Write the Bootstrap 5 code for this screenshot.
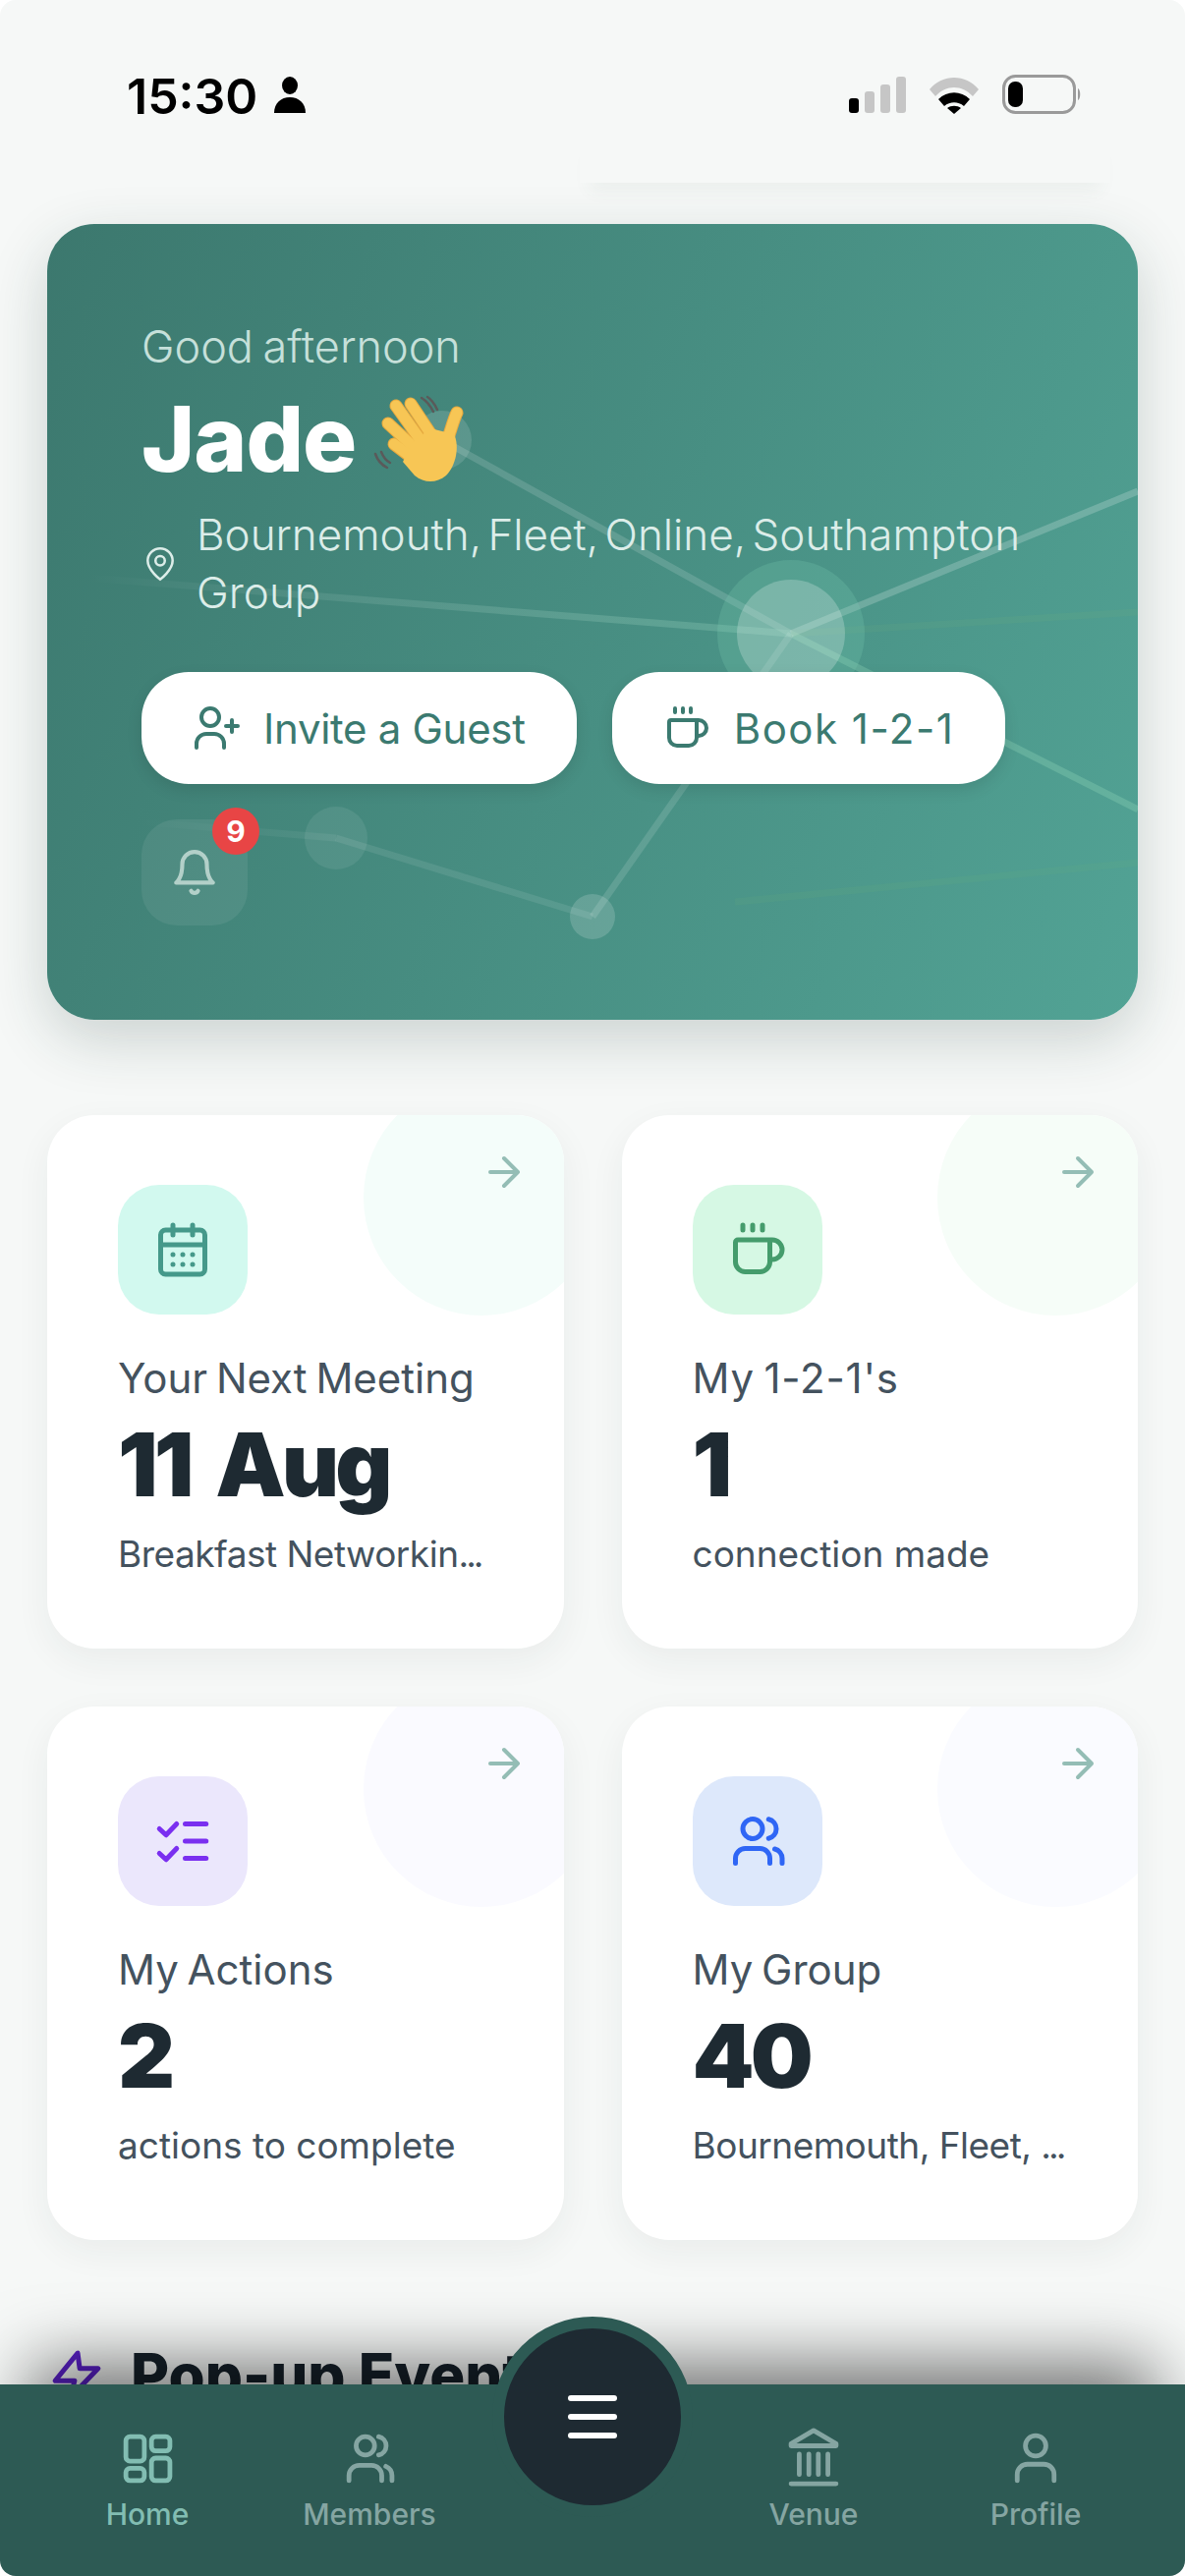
<!DOCTYPE html>
<html lang="en">

<head>
  <meta charset="UTF-8">
  <meta name="viewport" content="width=device-width, initial-scale=1.0">
  <title>Dashboard</title>
  <link rel="stylesheet" href="https://cdn.jsdelivr.net/npm/bootstrap@5.3.3/dist/css/bootstrap.min.css">
  <style>
    html, body { height: 100%; background: #fff; }

    body { font-family: Inter, "Liberation Sans", sans-serif; }

    svg { display: block; overflow: visible; fill: none; stroke: currentColor; stroke-linecap: round; stroke-linejoin: round; }

    .phone {
      position: relative;
      width: 1206px;
      height: 2622px;
      overflow: hidden;
      background: #f6f8f7;
      border-radius: 16px;
    }

    /* status bar */
    .status-bar {
      position: relative;
      height: 228px;
      padding: 70px 106px 0 129px;
    }

    .status-time { font: 600 50px/56px Inter, sans-serif; color: #000; }

    .ghost-shadow {
      position: absolute;
      left: 590px;
      top: 130px;
      width: 540px;
      height: 56px;
      background: #f6f8f7;
      box-shadow: 0 18px 18px -10px rgba(60, 100, 90, .06);
    }

    /* hero */
    .hero {
      position: relative;
      height: 810px;
      margin: 0 48px;
      padding: 97px 96px 0;
      border-radius: 48px;
      overflow: hidden;
      background: linear-gradient(112deg, #3c786e 0%, #52a395 100%);
      color: #fff;
    }

    .hero-wrap { position: relative; }

    .hero-shadow {
      position: absolute;
      left: 48px;
      right: 48px;
      top: 0;
      height: 810px;
      border-radius: 48px;
      box-shadow: 0 20px 60px rgba(30, 60, 55, .2);
    }

    .hero-net { position: absolute; left: 0; top: 0; width: 1110px; height: 810px; }

    .hero-body { position: relative; }

    .hero-greet { font-size: 45px; line-height: 56px; font-weight: 300; color: #c6e0da; word-spacing: -3px; }

    .hero-name { font-size: 92px; line-height: 100px; font-weight: 800; margin: 16px 0 0; letter-spacing: -1px; gap: 18px; }

    .hero-loc { margin-top: 18px; font-size: 44px; line-height: 59px; font-weight: 300; color: #dcede9; word-spacing: -6px; }

    .hero-btn {
      height: 114px;
      padding: 0 52px;
      gap: 24px;
      border: 0;
      border-radius: 48px;
      background: #fff;
      color: #3b7a70;
      font-size: 42px;
      font-weight: 400;
      letter-spacing: -.3px;
      box-shadow: 0 6px 16px rgba(0, 0, 0, .1);
    }

    .hero-btn.is-wide { letter-spacing: 1.5px; }

    .hero-btn:hover, .hero-btn:active { background: #fff !important; color: #3b7a70 !important; }

    .bell-box {
      position: relative;
      width: 108px;
      height: 108px;
      margin-top: 36px;
      border-radius: 36px;
      background: rgba(255, 255, 255, .07);
      color: #b3d0c9;
    }

    .bell-count {
      width: 48px;
      height: 48px;
      left: 72px;
      top: -12px;
      background: #e84545;
      font: 700 30px/48px Inter, sans-serif;
      color: #fff;
      text-align: center;
      padding: 0;
    }

    /* stat cards */
    .stat-wrap { padding: 97px 48px 0; }

    .stat-row { --bs-gutter-x: 59px; --bs-gutter-y: 59px; }

    .stat-card {
      position: relative;
      height: 543px;
      padding: 71px 72px 0;
      border: 0;
      border-radius: 48px;
      overflow: hidden;
      background: #fff;
      box-shadow: 0 12px 36px rgba(30, 50, 50, .06);
    }

    .stat-blob { position: absolute; right: -36px; top: -36px; width: 240px; height: 240px; border-radius: 50%; }

    .stat-arrow { position: absolute; right: 37px; top: 34px; color: #94bdb5; }

    .stat-icon { position: relative; width: 132px; height: 132px; border-radius: 42px; }

    .stat-label { margin-top: 40px; font-size: 42px; line-height: 50px; color: #44525e; font-weight: 400; word-spacing: -3px; }

    .stat-label.is-wide { letter-spacing: .8px; }

    .stat-value { margin-top: 13px; font-size: 90px; line-height: 100px; font-weight: 900; color: #1e2a32; letter-spacing: -4px; word-spacing: 12px; }

    .stat-sub { margin-top: 18px; font-size: 37px; line-height: 46px; color: #44525e; white-space: nowrap; }

    .stat-sub.is-cut { letter-spacing: -.5px; }

    .cut-dots { letter-spacing: -3px; }

    .tint-teal .stat-blob { background: #f4fdfa; }
    .tint-teal .stat-icon { background: #d2f9ef; color: #45998a; }
    .tint-green .stat-blob { background: #f6fdf8; }
    .tint-green .stat-icon { background: #d6f8e4; color: #459c6c; }
    .tint-purple .stat-blob { background: #fafaff; }
    .tint-purple .stat-icon { background: #ebe7fc; color: #7a2ff0; }
    .tint-blue .stat-blob { background: #fafbff; }
    .tint-blue .stat-icon { background: #dde8fb; color: #2f66f5; }

    /* section behind the tab bar */
    .popup-head { margin: 102px 48px 0 53px; gap: 30px; font-size: 60px; line-height: 70px; font-weight: 800; color: #16212a; white-space: nowrap; }

    .popup-head svg { color: #5b21c9; }

    /* tab bar */
    .tab-bar {
      position: absolute;
      left: 0;
      right: 0;
      bottom: 0;
      height: 195px;
      padding: 0 37px;
      background: #2d5a54;
      box-shadow: 0 -50px 70px -30px rgba(0, 0, 0, .55);
    }

    .tab-item { width: 226px; padding-top: 50px; gap: 14px; color: #85a5a2; font-size: 30px; line-height: 36px; font-weight: 500; text-decoration: none; }

    .tab-item.is-active { color: #82bdb2; }

    .tab-spacer { width: 226px; }

    .tab-fab {
      position: absolute;
      left: 501px;
      top: -69px;
      width: 204px;
      height: 204px;
      padding: 0;
      border: 12px solid #2d5a54;
      border-radius: 50%;
      background: #1e2a32;
      gap: 13px;
    }

    .tab-fab:hover, .tab-fab:active { background: #1e2a32 !important; border-color: #2d5a54 !important; }

    .fab-line { width: 50px; height: 6px; border-radius: 3px; background: #fff; }
  </style>
</head>

<body>
  <div class="phone">
    <!-- Status bar -->
    <div class="ghost-shadow"></div>
    <div class="status-bar d-flex justify-content-between">
      <div class="d-flex align-items-start gap-3 position-relative">
        <span class="status-time">15:30</span>
        <svg class="mt-2" width="34" height="37" viewBox="0 0 34 37" style="stroke:none;fill:#000">
          <ellipse cx="17" cy="9" rx="8" ry="9" />
          <path d="M1 37c0-10 7-16 16-16s16 6 16 16z" />
        </svg>
      </div>
      <div class="d-flex align-items-start gap-4 position-relative">
        <svg width="58" height="38" viewBox="0 0 58 38" style="stroke:none;margin-top:8px;fill:#c6c6c6">
          <rect x="0" y="22" width="10" height="15" rx="3" fill="#000" />
          <rect x="16" y="15" width="10" height="22" rx="3" />
          <rect x="32" y="8" width="10" height="29" rx="3" />
          <rect x="48" y="0" width="10" height="37" rx="3" />
        </svg>
        <svg width="50" height="38" viewBox="0 0 50 38" style="stroke:none;margin-top:8px">
          <path d="M0 13C13 -3 37 -3 50 13l-6 7C33 8 17 8 6 20z" fill="#c6c6c6" />
          <path d="M9 23c9-9 23-9 32 0l-6 7c-6-5-14-5-20 0z" fill="#000" />
          <path d="M18 32c4-3 10-3 14 0l-7 6z" fill="#000" />
        </svg>
        <svg width="80" height="40" viewBox="0 0 80 40" style="stroke:none;margin-top:6px">
          <rect x="1.500" y="1.500" width="72" height="37" rx="12" fill="none" stroke="#9a9a9a" stroke-width="3" />
          <rect x="6" y="7" width="15" height="26" rx="7" fill="#000" />
          <path d="M77 14c3 1 3 11 0 12z" fill="#9a9a9a" />
        </svg>
      </div>
    </div>

    <!-- Hero -->
    <div class="hero-wrap">
      <div class="hero-shadow"></div>
      <div class="hero">
        <svg class="hero-net" viewBox="0 0 1110 810" style="stroke:none">
          <defs>
            <linearGradient id="fadeLeft" x1="0" x2="1">
              <stop offset="0" stop-color="#fff" stop-opacity="0" />
              <stop offset="1" stop-color="#8fd0b8" stop-opacity=".3" />
            </linearGradient>
            <linearGradient id="fadeBack" x1="0" x2="1">
              <stop offset="0" stop-color="#fff" stop-opacity="0" />
              <stop offset="1" stop-color="#fff" stop-opacity=".07" />
            </linearGradient>
          </defs>
          <g fill="none" stroke-width="7" stroke-linecap="butt">
            <line x1="402" y1="220" x2="757" y2="417" stroke="#fff" stroke-opacity=".14" />
            <line x1="757" y1="417" x2="1110" y2="272" stroke="#fff" stroke-opacity=".2" />
            <line x1="757" y1="417" x2="1110" y2="596" stroke="#9be0c0" stroke-opacity=".28" />
            <polyline points="40,360 757,417" stroke="url(#fadeLeft)" />
            <line x1="757" y1="417" x2="1110" y2="395" stroke="#7ab878" stroke-opacity=".12" />
            <line x1="555" y1="705" x2="757" y2="417" stroke="#fff" stroke-opacity=".13" />
            <line x1="294" y1="625" x2="555" y2="705" stroke="#fff" stroke-opacity=".09" />
            <polyline points="90,608 294,625" stroke="url(#fadeBack)" />
            <line x1="700" y1="690" x2="1110" y2="650" stroke="#7ab878" stroke-opacity=".1" />
          </g>
          <circle cx="402" cy="220" r="30" fill="#fff" fill-opacity=".13" />
          <circle cx="294" cy="625" r="32" fill="#fff" fill-opacity=".08" />
          <circle cx="555" cy="705" r="23" fill="#fff" fill-opacity=".16" />
          <circle cx="757" cy="417" r="75" fill="#7fd0b8" fill-opacity=".22" />
          <circle cx="757" cy="417" r="55" fill="#fff" fill-opacity=".22" />
        </svg>
        <div class="hero-body">
          <div class="hero-greet">Good afternoon</div>
          <h1 class="hero-name d-flex align-items-center">Jade
            <svg width="90" height="90" viewBox="0 0 90 90" role="img" aria-label="waving hand" style="stroke-width:0">
              <g fill="none" stroke="#5a5a5a" stroke-width="2.500">
                <path d="M49 3c5 3 9 8 12 14" />
                <path d="M55 2c2 1 7 6 10 13" />
                <path d="M2 60c2 6 6 11 12 14" />
                <path d="M8 58c2 5 5 9 9 11" />
              </g>
              <g fill="none">
                <path d="M85 18C82 24 80 32 76 44" stroke="#e8aa3f" stroke-width="13" />
                <path d="M38 9L60 42" stroke="#e8aa3f" stroke-width="13" />
                <path d="M23 11L48 46" stroke="#e8aa3f" stroke-width="13" />
                <path d="M15 29L42 54" stroke="#e8aa3f" stroke-width="13" />
                <path d="M21 50L42 66" stroke="#e8aa3f" stroke-width="13" />
                <path d="M85 18C82 24 80 32 76 44" stroke="#f7c655" stroke-width="11" />
                <path d="M38 9L60 42" stroke="#f7c655" stroke-width="11" />
                <path d="M23 11L48 46" stroke="#f7c655" stroke-width="11" />
                <path d="M15 29L42 54" stroke="#f7c655" stroke-width="11" />
                <path d="M21 50L42 66" stroke="#f7c655" stroke-width="11" />
              </g>
              <path d="M40 48L58 34 82 40C88 52 84 72 74 82 64 90 52 90 42 82L30 68z" fill="#f7c655" />
            </svg>
          </h1>
          <div class="hero-loc d-flex align-items-center">
            <svg class="flex-shrink-0" width="38" height="38" viewBox="0 0 24 24" stroke-width="1.600" style="margin-right:18px">
              <path d="M20 10c0 6-8 12-8 12s-8-6-8-12a8 8 0 0 1 16 0Z" />
              <circle cx="12" cy="10" r="3" />
            </svg>
            <span>Bournemouth, Fleet, Online, Southampton Group</span>
          </div>
          <div class="d-flex" style="gap:36px;margin-top:51px">
            <button type="button" class="btn hero-btn d-flex align-items-center">
              <svg width="48" height="48" viewBox="0 0 24 24" stroke-width="2">
                <circle cx="9" cy="6.500" r="4.500" />
                <path d="M2 22v-2a5 5 0 0 1 5-5h4a5 5 0 0 1 5 5v2" />
                <path d="M20 8v6M17 11h6" />
              </svg>
              Invite a Guest
            </button>
            <button type="button" class="btn hero-btn is-wide d-flex align-items-center">
              <svg width="48" height="48" viewBox="0 0 24 24" stroke-width="2">
                <path d="M6 2v2M10 2v2M14 2v2" />
                <path d="M16 8a1 1 0 0 1 1 1v8a4 4 0 0 1-4 4H7a4 4 0 0 1-4-4V9a1 1 0 0 1 1-1h14a4 4 0 1 1 0 8h-1" />
              </svg>
              Book 1-2-1
            </button>
          </div>
          <div class="bell-box d-flex align-items-center justify-content-center">
            <svg width="50" height="50" viewBox="0 0 24 24" stroke-width="2">
              <path d="M6 8a6 6 0 0 1 12 0c0 7 3 9 3 9H3s3-2 3-9" />
              <path d="M10.300 21a1.940 1.940 0 0 0 3.400 0" />
            </svg>
            <span class="badge rounded-circle position-absolute bell-count">9</span>
          </div>
        </div>
      </div>
    </div>

    <!-- Stat cards -->
    <div class="stat-wrap">
      <div class="row row-cols-2 stat-row">
        <div class="col">
          <div class="card stat-card tint-teal">
            <div class="stat-blob"></div>
            <svg class="stat-arrow" width="48" height="48" viewBox="0 0 24 24" stroke-width="2"><path d="M5 12h14M12 5l7 7-7 7" /></svg>
            <div class="stat-icon d-flex align-items-center justify-content-center">
              <svg width="60" height="60" viewBox="0 0 24 24" stroke-width="2">
                <rect x="3" y="4" width="18" height="18" rx="2" />
                <path d="M8 2v4M16 2v4M3 10h18" />
                <path d="M8 14h.01M12 14h.01M16 14h.01M8 18h.01M12 18h.01M16 18h.01" />
              </svg>
            </div>
            <div class="stat-label">Your Next Meeting</div>
            <div class="stat-value">11 Aug</div>
            <div class="stat-sub is-cut">Breakfast Networkin<span class="cut-dots">...</span></div>
          </div>
        </div>
        <div class="col">
          <div class="card stat-card tint-green">
            <div class="stat-blob"></div>
            <svg class="stat-arrow" width="48" height="48" viewBox="0 0 24 24" stroke-width="2"><path d="M5 12h14M12 5l7 7-7 7" /></svg>
            <div class="stat-icon d-flex align-items-center justify-content-center">
              <svg width="60" height="60" viewBox="0 0 24 24" stroke-width="2">
                <path d="M6 2v2M10 2v2M14 2v2" />
                <path d="M16 8a1 1 0 0 1 1 1v8a4 4 0 0 1-4 4H7a4 4 0 0 1-4-4V9a1 1 0 0 1 1-1h14a4 4 0 1 1 0 8h-1" />
              </svg>
            </div>
            <div class="stat-label is-wide">My 1-2-1's</div>
            <div class="stat-value">1</div>
            <div class="stat-sub">connection made</div>
          </div>
        </div>
        <div class="col">
          <div class="card stat-card tint-purple">
            <div class="stat-blob"></div>
            <svg class="stat-arrow" width="48" height="48" viewBox="0 0 24 24" stroke-width="2"><path d="M5 12h14M12 5l7 7-7 7" /></svg>
            <div class="stat-icon d-flex align-items-center justify-content-center">
              <svg width="60" height="60" viewBox="0 0 24 24" stroke-width="2">
                <path d="M2.500 7l2.700 2.500L9.500 5M2.500 17l2.700 2.500 4.300-4.500" />
                <path d="M13 5h8.500M13 12h8.500M13 19h8.500" />
              </svg>
            </div>
            <div class="stat-label">My Actions</div>
            <div class="stat-value">2</div>
            <div class="stat-sub">actions to complete</div>
          </div>
        </div>
        <div class="col">
          <div class="card stat-card tint-blue">
            <div class="stat-blob"></div>
            <svg class="stat-arrow" width="48" height="48" viewBox="0 0 24 24" stroke-width="2"><path d="M5 12h14M12 5l7 7-7 7" /></svg>
            <div class="stat-icon d-flex align-items-center justify-content-center">
              <svg width="60" height="60" viewBox="0 0 24 24" stroke-width="2">
                <circle cx="10" cy="7" r="4" />
                <path d="M3 21v-2a4 4 0 0 1 4-4h6a4 4 0 0 1 4 4v2" />
                <path d="M16.500 3.100a4 4 0 0 1 0 7.800M22 21v-2a4 4 0 0 0-3-3.800" />
              </svg>
            </div>
            <div class="stat-label">My Group</div>
            <div class="stat-value">40</div>
            <div class="stat-sub is-cut">Bournemouth, Fleet, <span class="cut-dots">...</span></div>
          </div>
        </div>
      </div>
    </div>

    <!-- Pop-up events, cut off by the tab bar -->
    <div class="popup-head d-flex align-items-center">
      <svg width="50" height="50" viewBox="0 0 24 24" stroke-width="2.400">
        <path d="M12.500 1.500L1.500 15H11l-2 8 13.500-14h-9z" />
      </svg>
      Pop-up Events
    </div>

    <!-- Tab bar -->
    <nav class="tab-bar d-flex">
      <a class="tab-item is-active d-flex flex-column align-items-center" href="#">
        <svg width="50" height="50" viewBox="0 0 24 24" stroke-width="2.300">
          <rect x="1.500" y="1.500" width="9" height="12" rx="2" />
          <rect x="14" y="1.500" width="9" height="7" rx="2" />
          <rect x="14" y="12" width="9" height="11" rx="2" />
          <rect x="1.500" y="17" width="9" height="6" rx="2" />
        </svg>
        Home
      </a>
      <a class="tab-item d-flex flex-column align-items-center" href="#">
        <svg width="50" height="50" viewBox="0 0 24 24" stroke-width="2.300">
          <circle cx="10" cy="6" r="4.500" />
          <path d="M2 23v-2.500a5 5 0 0 1 5-5h6a5 5 0 0 1 5 5V23" />
          <path d="M16.500 1.500a4.600 4.600 0 0 1 0 9M23 23v-2.500a5 5 0 0 0-3-4.500" />
        </svg>
        Members
      </a>
      <div class="tab-spacer"></div>
      <a class="tab-item d-flex flex-column align-items-center" href="#">
        <svg width="50" height="50" viewBox="0 0 24 24" stroke-width="2.300">
          <path d="M12 -1.500L1 5v1h22V5z" />
          <path d="M5 10v10M9.700 10v10M14.300 10v10M19 10v10M1 24.500h22" />
        </svg>
        Venue
      </a>
      <a class="tab-item d-flex flex-column align-items-center" href="#">
        <svg width="50" height="50" viewBox="0 0 24 24" stroke-width="2.300">
          <circle cx="12" cy="6" r="5" />
          <path d="M3 23v-3a5 5 0 0 1 5-5h8a5 5 0 0 1 5 5v3" />
        </svg>
        Profile
      </a>
      <button type="button" class="btn tab-fab d-flex flex-column align-items-center justify-content-center" aria-label="Menu">
        <span class="fab-line"></span>
        <span class="fab-line"></span>
        <span class="fab-line"></span>
      </button>
    </nav>
  </div>

  <script src="https://cdn.jsdelivr.net/npm/bootstrap@5.3.3/dist/js/bootstrap.bundle.min.js"></script>
</body>

</html>
